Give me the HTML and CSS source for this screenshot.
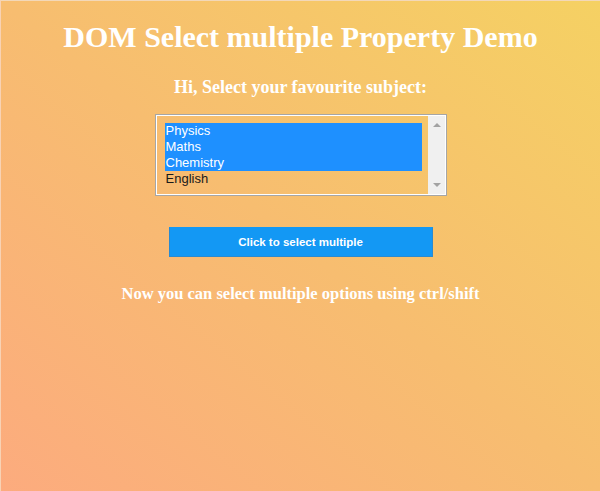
FILE: index.html
```html
<!DOCTYPE html>
<html lang="en">
<head>
<meta charset="utf-8">
<title>DOM Select multiple Property Demo</title>
<link rel="stylesheet" href="styles.css">
</head>
<body>
  <main class="page">
    <h1 class="title">DOM Select multiple Property Demo</h1>
    <h3 class="subtitle">Hi, Select your favourite subject:</h3>
    <div class="listbox" role="listbox" aria-multiselectable="true">
      <ul class="options">
        <li class="option selected">Physics</li>
        <li class="option selected">Maths</li>
        <li class="option selected">Chemistry</li>
        <li class="option">English</li>
      </ul>
      <div class="scrollbar">
        <span class="arrow up"></span>
        <span class="arrow down"></span>
      </div>
    </div>
    <button class="action" type="button">Click to select multiple</button>
    <h4 class="note">Now you can select multiple options using ctrl/shift</h4>
  </main>
</body>
</html>
```
FILE: styles.css
```css
html, body {
  margin: 0;
  padding: 0;
  height: 100%;
}
body {
  background: linear-gradient(to top right, #fcab7e 0%, #f7bd70 50%, #f5d163 100%);
  font-family: "Liberation Serif", "Times New Roman", serif;
  color: #ffffff;
  border-top: 1px solid #f3d8b8;
  border-left: 1px solid #f8d2b4;
  box-sizing: border-box;
}
.page {
  display: flex;
  flex-direction: column;
  align-items: center;
  padding-top: 17px;
}
.title {
  margin: 0;
  font-size: 30px;
  line-height: 37px;
  font-weight: bold;
}
.subtitle {
  margin: 21px 0 0;
  font-size: 18px;
  line-height: 22px;
  font-weight: bold;
}
.listbox {
  margin-top: 16px;
  width: 292px;
  height: 82px;
  box-sizing: border-box;
  border: 1px solid #a6a6a6;
  box-shadow: inset 0 0 0 1px #ffffff;
  display: flex;
  justify-content: space-between;
  padding: 1px 1px 1px 9px;
}
.options {
  list-style: none;
  margin: 7px 0 0;
  padding: 0;
  width: 257px;
  font-family: "Liberation Sans", Arial, sans-serif;
  font-size: 13px;
}
.option {
  height: 16px;
  line-height: 16px;
  padding-left: 1px;
  color: #1a1a1a;
}
.option.selected {
  background: #1e90ff;
  color: #ffffff;
}
.scrollbar {
  width: 17px;
  background: #f0f0f0;
  position: relative;
}
.arrow {
  position: absolute;
  left: 5px;
  width: 0;
  height: 0;
  border-left: 4px solid transparent;
  border-right: 4px solid transparent;
}
.arrow.up {
  top: 7px;
  border-bottom: 4px solid #a3a3a3;
}
.arrow.down {
  bottom: 7px;
  border-top: 4px solid #a3a3a3;
}
.action {
  margin-top: 31px;
  width: 264px;
  height: 30px;
  background: #1398f4;
  border: 1px solid #2a8ad0;
  border-top-color: #1398f4;
  color: #ffffff;
  font-family: "Liberation Sans", Arial, sans-serif;
  font-size: 11.5px;
  font-weight: bold;
  padding: 0;
}
.note {
  margin: 28px 0 0;
  font-size: 16.5px;
  line-height: 18px;
  font-weight: bold;
}
```
